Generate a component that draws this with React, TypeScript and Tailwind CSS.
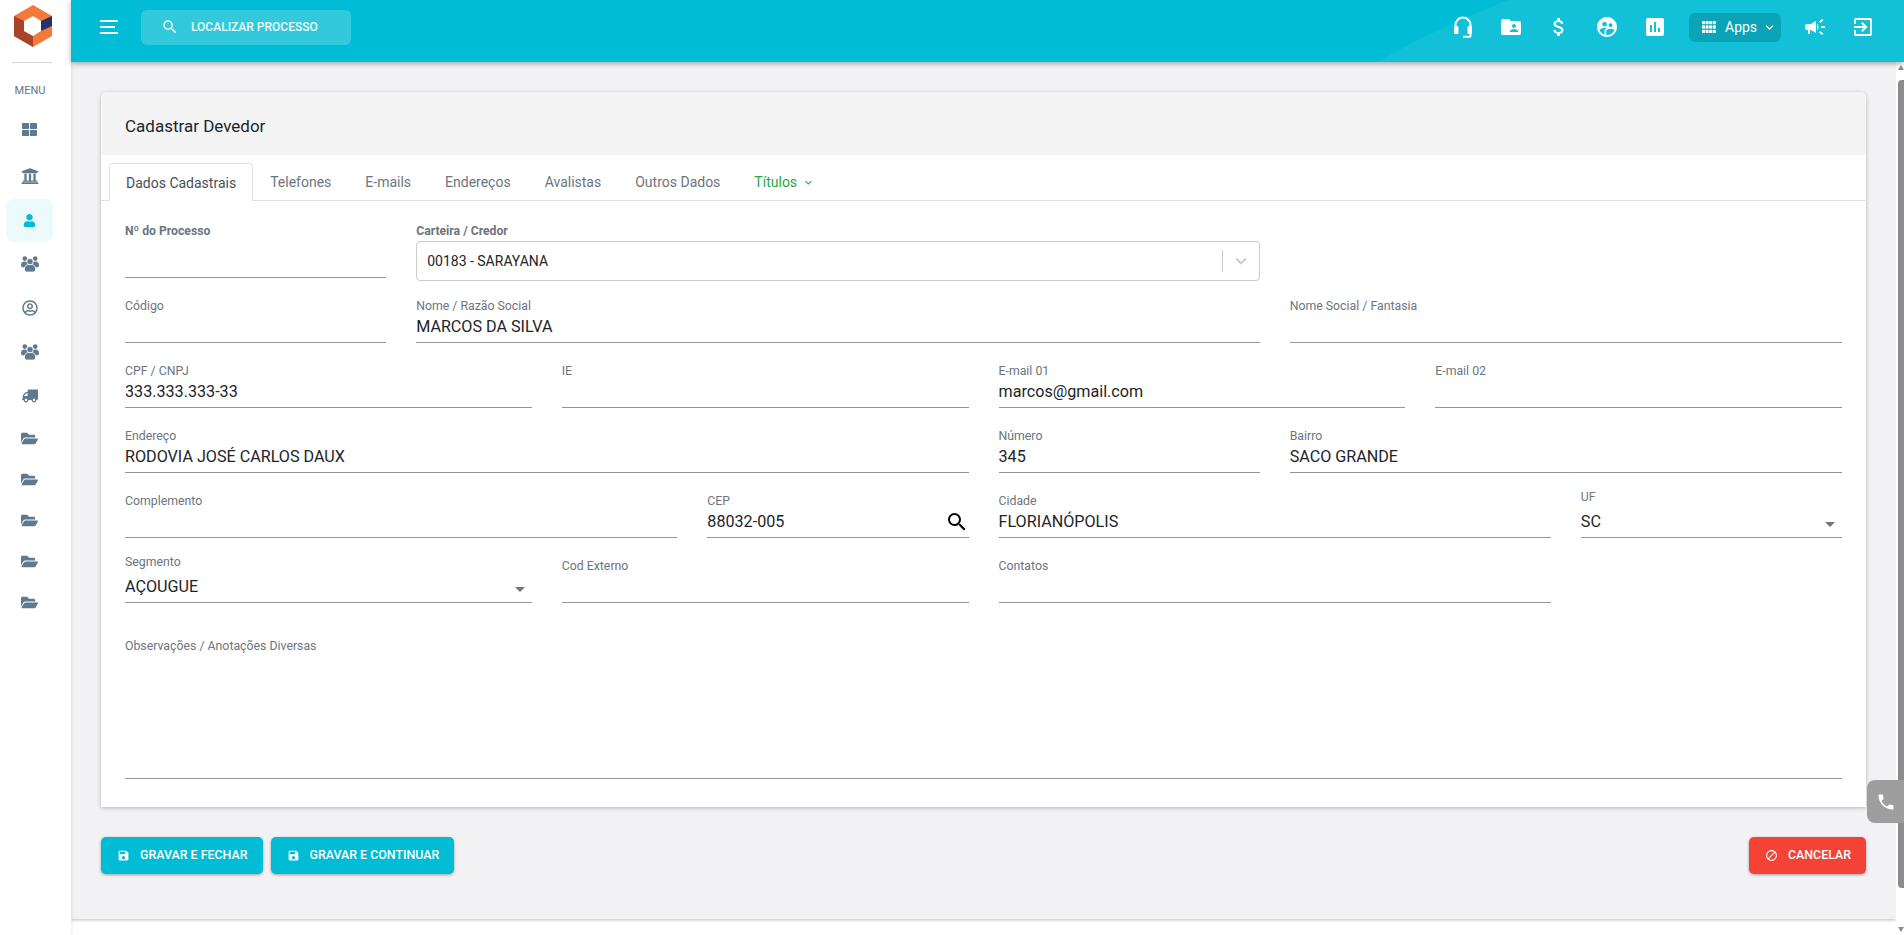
import type { ReactNode } from "react";
import { FaFolderOpen, FaRegUserCircle, FaThLarge, FaTruck, FaUniversity, FaUser } from "react-icons/fa";
import {
  MdArrowDropDown,
  MdAssessment,
  MdAttachMoney,
  MdBlock,
  MdCampaign,
  MdExitToApp,
  MdFolderShared,
  MdKeyboardArrowDown,
  MdPhone,
  MdSave,
  MdSearch,
  MdSupervisedUserCircle,
} from "react-icons/md";

function UsersIcon() {
  return (
    <svg width="18" height="16" viewBox="0 0 18 16" fill="currentColor">
      <circle cx="3.8" cy="2.6" r="2.3" />
      <circle cx="14.2" cy="2.6" r="2.3" />
      <path d="M0 9.2C0 6.8 1.4 5.6 3.6 5.6c2.2 0 3.2 1 3.2 3v2.6H1.4C.6 11.2 0 10.4 0 9.2z" />
      <path d="M18 9.2c0-2.4-1.4-3.6-3.6-3.6-2.2 0-3.2 1-3.2 3v2.6h5.4c.8 0 1.4-.8 1.4-2z" />
      <circle cx="9" cy="5.6" r="3.2" stroke="#ffffff" strokeWidth="0.8" />
      <path
        d="M3.4 13c0-3 1.8-4.6 5.6-4.6s5.6 1.6 5.6 4.6c0 1.6-.8 3-2.2 3H5.6c-1.4 0-2.2-1.4-2.2-3z"
        stroke="#ffffff"
        strokeWidth="0.8"
      />
    </svg>
  );
}

function HeadsetIcon() {
  return (
    <svg width="18" height="22" viewBox="0 0 18 22" fill="none" stroke="currentColor" strokeWidth="2">
      <path d="M1.5 13V9a7.5 7.5 0 0 1 15 0v4" />
      <rect x="0" y="10" width="4.5" height="8" rx="1.5" fill="currentColor" stroke="none" />
      <rect x="13.5" y="10" width="4.5" height="8" rx="1.5" fill="currentColor" stroke="none" />
      <path d="M16.5 17v3a.8.8 0 0 1-.8.8H9" />
    </svg>
  );
}

const sideItems = [
  { icon: <FaThLarge size={15} />, h: "h-[45px]" },
  { icon: <FaUniversity size={18} />, h: "h-[47px]" },
  { icon: <FaUser size={13} />, h: "h-[43px]", active: true },
  { icon: <UsersIcon />, h: "h-[43px]" },
  { icon: <FaRegUserCircle size={16} />, h: "h-[45px]" },
  { icon: <UsersIcon />, h: "h-[44px]" },
  { icon: <FaTruck size={16} className="-scale-x-100" />, h: "h-[44px]" },
  { icon: <FaFolderOpen size={17} />, h: "h-[41px]" },
  { icon: <FaFolderOpen size={17} />, h: "h-[41px]" },
  { icon: <FaFolderOpen size={17} />, h: "h-[41px]" },
  { icon: <FaFolderOpen size={17} />, h: "h-[41px]" },
  { icon: <FaFolderOpen size={17} />, h: "h-[40px]" },
];

const tabs = ["Telefones", "E-mails", "Endereços", "Avalistas", "Outros Dados"];

function Logo() {
  return (
    <svg width="38" height="42" viewBox="0 0 38 42" className="ml-[3px] shrink-0">
      <polygon points="19,0 38,11 38,31 19,42 0,31 0,11" fill="#f4783a" />
      <polygon points="0,11 10,16 10,26 19,31 19,42 0,31" fill="#a8432a" />
      <polygon points="27,16 38,11 38,21 27,26" fill="#22336e" />
      <polygon points="19,11 27,16 27,26 19,31 10,26 10,16" fill="#ffffff" />
    </svg>
  );
}

function Sidebar() {
  return (
    <aside className="w-[71px] shrink-0 bg-white flex flex-col items-center shadow-[1px_0_3px_rgba(0,0,0,0.08)] z-10">
      <div className="h-[63px] w-[40px] mr-[8px] border-b border-[#d4d6da] flex items-start justify-center pt-[5px]">
        <Logo />
      </div>
      <div className="mt-[21px] text-[11px] leading-[14px] text-[#64748b] mr-[11px]">MENU</div>
      <div className="mt-[9px] w-full pl-[6px] pr-[18px]">
        {sideItems.map((item, idx) => (
          <div
            key={idx}
            className={`${item.h} flex items-center justify-center rounded-lg ${
              item.active ? "bg-[#ecfafc] text-[#00bcd4]" : "text-[#5f7a8f]"
            }`}
          >
            {item.icon}
          </div>
        ))}
      </div>
    </aside>
  );
}

function HeaderIcon({ children }: { children: ReactNode }) {
  return <div className="w-[48px] flex items-center justify-center text-white">{children}</div>;
}

function AppsGrid() {
  const cells = [0, 1, 2].flatMap((r) => [0, 1, 2, 3].map((c) => ({ r, c })));
  return (
    <svg width="14" height="12" viewBox="0 0 14 12" fill="currentColor">
      {cells.map(({ r, c }) => (
        <rect key={`${r}-${c}`} x={c * 3.6} y={r * 4.4} width="3" height="3.2" />
      ))}
    </svg>
  );
}

function Header() {
  return (
    <header className="relative h-[62px] shrink-0 bg-[#00bcd4] flex items-center pb-[8px] overflow-hidden shadow-[0_2px_5px_rgba(0,0,0,0.3)] z-20">
      <div className="absolute left-[755px] top-[-74px] w-[2148px] h-[2148px] rounded-full bg-white/[0.07]" />
      <div className="relative ml-[29px] w-[18px] flex flex-col gap-[4px]">
        <div className="h-[2px] bg-white" />
        <div className="h-[2px] bg-white w-[15px]" />
        <div className="h-[2px] bg-white" />
      </div>
      <div className="relative ml-[23px] w-[210px] h-[35px] rounded-md bg-white/20 flex items-center text-white/90 text-[12px] font-medium">
        <MdSearch size={18} className="ml-[20px]" />
        <span className="ml-[12px]">LOCALIZAR PROCESSO</span>
      </div>
      <div className="relative ml-auto mr-[17px] flex items-center">
        <HeaderIcon><HeadsetIcon /></HeaderIcon>
        <HeaderIcon><MdFolderShared size={24} /></HeaderIcon>
        <HeaderIcon><MdAttachMoney size={24} /></HeaderIcon>
        <HeaderIcon><MdSupervisedUserCircle size={24} /></HeaderIcon>
        <HeaderIcon><MdAssessment size={24} /></HeaderIcon>
        <div className="mx-[10px] w-[92px] h-[29px] rounded-md bg-[#0aa3b8] flex items-center text-white text-[14px] pl-[13px]">
          <AppsGrid />
          <span className="ml-[9px]">Apps</span>
          <MdKeyboardArrowDown size={15} className="ml-[5px]" />
        </div>
        <HeaderIcon><MdCampaign size={24} /></HeaderIcon>
        <HeaderIcon><MdExitToApp size={24} /></HeaderIcon>
      </div>
    </header>
  );
}

interface FieldProps {
  label: string;
  value?: string;
  span: string;
  trailing?: ReactNode;
  labelClass?: string;
}

function Field({ label, value, span, trailing, labelClass }: FieldProps) {
  return (
    <div className={`${span} flex flex-col justify-end`}>
      <label className={`text-[12.3px] leading-[14px] text-[#6c757d] ${labelClass ?? ""}`}>{label}</label>
      <div className="h-[30px] pb-[1px] border-b border-[#949494] flex items-center justify-between text-[16.15px] text-[#212529]">
        <span>{value}</span>
        {trailing}
      </div>
    </div>
  );
}

function CadastroForm() {
  return (
    <div className="px-[24px] pt-[23px] pb-[28px]">
      <div className="grid grid-cols-12 gap-x-[30px] grid-rows-[54px_repeat(5,65px)]">
        <div className="col-span-2 flex flex-col justify-between">
          <label className="text-[12.2px] leading-[14px] font-bold text-[#6c757d]">Nº do Processo</label>
          <div className="h-[30px] border-b border-[#949494]" />
        </div>
        <div className="col-span-6">
          <label className="block text-[12.2px] leading-[14px] font-bold text-[#6c757d]">Carteira / Credor</label>
          <div className="mt-[3px] h-[40px] border border-[#cccccc] rounded flex items-center text-[14px] text-[#212529] pl-[10px]">
            <span className="flex-1">00183 - SARAYANA</span>
            <div className="w-px h-[22px] bg-[#cccccc]" />
            <MdKeyboardArrowDown size={22} className="mx-[7px] text-[#cccccc]" />
          </div>
        </div>
        <div className="col-span-4" />

        <Field span="col-span-2" label="Código" />
        <Field span="col-span-6" label="Nome / Razão Social" value="MARCOS DA SILVA" />
        <Field span="col-span-4" label="Nome Social / Fantasia" />

        <Field span="col-span-3" label="CPF / CNPJ" value="333.333.333-33" />
        <Field span="col-span-3" label="IE" />
        <Field span="col-span-3" label="E-mail 01" value="marcos@gmail.com" />
        <Field span="col-span-3" label="E-mail 02" />

        <Field span="col-span-6" label="Endereço" value="RODOVIA JOSÉ CARLOS DAUX" />
        <Field span="col-span-2" label="Número" value="345" />
        <Field span="col-span-4" label="Bairro" value="SACO GRANDE" />

        <Field span="col-span-4" label="Complemento" />
        <Field
          span="col-span-2"
          label="CEP"
          value="88032-005"
          trailing={<MdSearch size={24} className="text-black" />}
        />
        <Field span="col-span-4" label="Cidade" value="FLORIANÓPOLIS" />
        <Field
          span="col-span-2"
          label="UF"
          value="SC"
          labelClass="pb-[4px]"
          trailing={<MdArrowDropDown size={24} className="text-[#757575] mt-[3px]" />}
        />

        <Field
          span="col-span-3"
          label="Segmento"
          value="AÇOUGUE"
          labelClass="pb-[4px]"
          trailing={<MdArrowDropDown size={24} className="text-[#757575] mt-[3px]" />}
        />
        <Field span="col-span-3" label="Cod Externo" />
        <Field span="col-span-4" label="Contatos" />
      </div>
      <div className="mt-[36px]">
        <label className="block text-[12.3px] leading-[14px] text-[#6c757d]">Observações / Anotações Diversas</label>
        <div className="h-[126px] border-b border-[#949494]" />
      </div>
    </div>
  );
}

function ActionButton({ color, icon, label }: { color: string; icon: ReactNode; label: string }) {
  return (
    <button
      type="button"
      className={`${color} h-[37px] pl-[16px] pr-[15px] rounded-[5px] flex items-center gap-[10px] text-white text-[12.4px] font-medium shadow-[0_1px_3px_rgba(0,0,0,0.35)]`}
    >
      {icon}
      {label}
    </button>
  );
}

export default function App() {
  return (
    <div className="relative h-[935px] overflow-hidden flex bg-white font-['Roboto',sans-serif]">
      <Sidebar />
      <div className="flex-1 min-w-0 flex flex-col">
        <Header />
        <div className="flex-1 flex min-h-0">
          <main className="flex-1 min-w-0 flex flex-col">
            <div className="h-[857px] bg-[#f2f2f5] px-[30px] pt-[30px] shadow-[0_1px_3px_rgba(0,0,0,0.25)]">
              <section className="bg-white rounded-t-md shadow-[0_1px_4px_rgba(0,0,0,0.25)]">
                <div className="h-[63px] bg-[#f4f4f5] rounded-t-md flex items-center px-[24px] pt-[6px] text-[17px] text-[#212529]">
                  Cadastrar Devedor
                </div>
                <nav className="h-[46px] pt-[8px] pl-[8px] border-b border-[#dee2e6] flex items-stretch text-[14px] text-[#6c757d]">
                  <div className="h-[38px] px-[16px] pt-[1px] bg-white border border-b-0 border-[#dee2e6] rounded-t flex items-center text-[#495057]">
                    Dados Cadastrais
                  </div>
                  {tabs.map((t) => (
                    <div key={t} className="h-[37px] px-[17px] pt-[1px] flex items-center">
                      {t}
                    </div>
                  ))}
                  <div className="h-[37px] px-[17px] pt-[1px] flex items-center text-[#28a745]">
                    Títulos
                    <MdKeyboardArrowDown size={13} className="ml-[5px]" />
                  </div>
                </nav>
                <CadastroForm />
              </section>
              <div className="mt-[30px] flex items-center gap-[8px]">
                <ActionButton color="bg-[#00bcd4]" icon={<MdSave size={13} />} label="GRAVAR E FECHAR" />
                <ActionButton color="bg-[#00bcd4]" icon={<MdSave size={13} />} label="GRAVAR E CONTINUAR" />
                <div className="ml-auto">
                  <ActionButton color="bg-[#f44336]" icon={<MdBlock size={13} />} label="CANCELAR" />
                </div>
              </div>
            </div>
          </main>
          <div className="w-[8px] shrink-0 bg-white relative">
            <div className="absolute left-[2px] right-0 top-[18px] bottom-[47px] rounded-l-sm bg-[#8c8c8c]" />
            <div className="absolute left-[2px] top-[3px] border-x-[3px] border-x-transparent border-b-[5px] border-b-[#8c8c8c]" />
            <div className="absolute left-[2px] bottom-[3px] border-x-[3px] border-x-transparent border-t-[5px] border-t-[#8c8c8c]" />
          </div>
        </div>
      </div>
      <div className="absolute right-0 top-[780px] w-[37px] h-[43px] rounded-l-lg bg-[#9e9e9e] flex items-center justify-center text-white z-30">
        <MdPhone size={20} />
      </div>
    </div>
  );
}
